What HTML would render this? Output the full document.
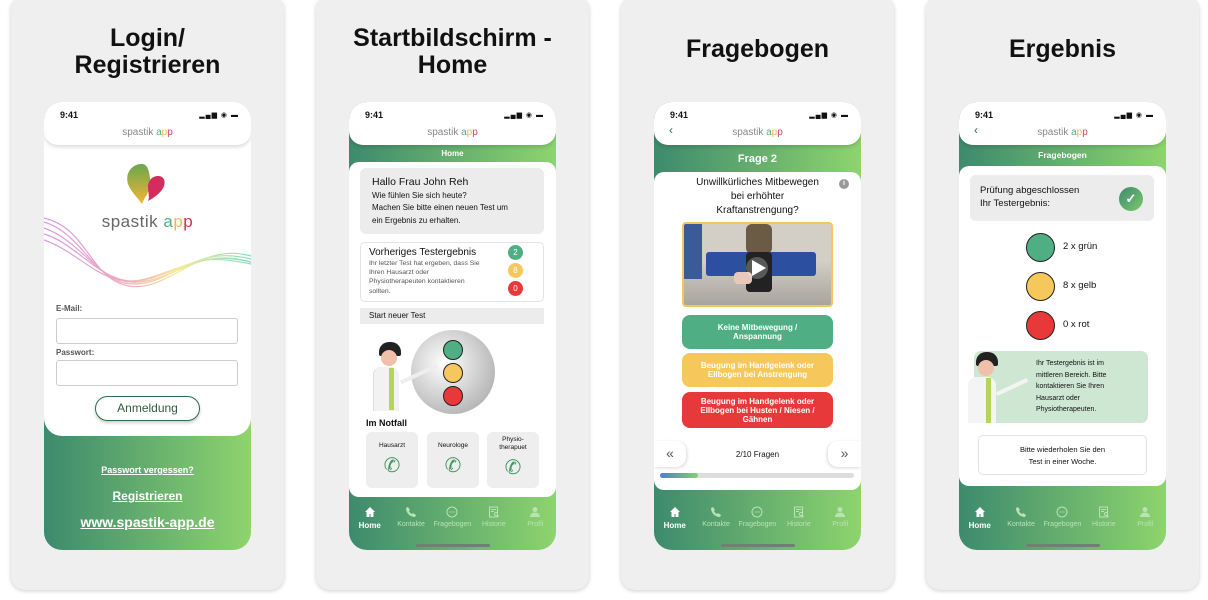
<!DOCTYPE html>
<html><head><meta charset="utf-8"><style>
*{margin:0;padding:0;box-sizing:border-box}
body{width:1208px;height:600px;background:#fff;position:relative;overflow:hidden;font-family:"Liberation Sans",sans-serif;color:#111}
.a{position:absolute}
.card{position:absolute;top:-4px;width:273px;height:594px;background:#efefef;border-radius:14px;box-shadow:0 1px 4px rgba(0,0,0,.2)}
.title{position:absolute;left:0;width:273px;text-align:center;font-weight:bold;font-size:25px;line-height:27px;color:#111}
.phone{position:absolute;top:102px;width:207px;height:448px;border-radius:18px;overflow:hidden;background:linear-gradient(90deg,#3d8a6e,#8ed46e)}
.hdr{position:absolute;left:0;top:0;width:207px;height:43px;background:#fff;border-radius:16px 16px 14px 14px;box-shadow:0 2px 4px rgba(0,0,0,.15);z-index:2}
.time{position:absolute;left:16px;top:8px;font-size:9px;font-weight:bold}
.sig{position:absolute;right:12px;top:9px;font-size:7px;letter-spacing:1px}
.brand{position:absolute;left:0;width:207px;top:25px;text-align:center;font-size:10px;color:#888}
.panel{position:absolute;left:0;width:207px;background:#fff;border-radius:10px}
.nav{position:absolute;left:0;width:207px;top:404px;display:flex;justify-content:space-around;font-size:7px;color:#b9e2b5;text-align:center}
.nav div{width:38px}.nav svg{display:block;margin:0 auto 3px}
.nav .on{color:#fff;font-weight:bold;font-size:8px}
.bar{position:absolute;left:67px;top:442px;width:74px;height:3px;border-radius:2px;background:#6f7f73}
.dot{position:absolute;border-radius:50%;border:1px solid #222}
.g{background:#4fae83}.y{background:#f6c75a}.r{background:#e7393a}
.btn{position:absolute;left:28px;width:151px;border-radius:8px;color:#fff;font-weight:bold;font-size:8px;text-align:center;display:flex;align-items:center;justify-content:center;line-height:9px}
.ph{font-size:20px;color:#3f9a62;margin-top:4px}
</style></head><body>

<div class="card" style="left:11px"><div class="title" style="top:29px">Login/<br>Registrieren</div></div>
<div class="card" style="left:316px"><div class="title" style="top:29px">Startbildschirm -<br>Home</div></div>
<div class="card" style="left:621px"><div class="title" style="top:40px">Fragebogen</div></div>
<div class="card" style="left:926px"><div class="title" style="top:40px">Ergebnis</div></div>

<!-- Phone 1 -->
<div class="phone" style="left:44px">
 <div class="a" style="left:0;top:0;width:207px;height:334px;background:#fff;border-radius:18px"></div>
 <div class="hdr"><div class="time">9:41</div><div class="sig">▂▄▆ ◉ ▬</div><div class="brand">spastik <span style="color:#4fae83">a</span><span style="color:#f0b84a">p</span><span style="color:#d6426a">p</span></div></div>
 <svg class="a" style="left:78px;top:60px" width="50" height="50" viewBox="0 0 50 50"><defs><linearGradient id="lg" x1="0" y1="0" x2="0" y2="1"><stop offset="0" stop-color="#6aa64f"/><stop offset="1" stop-color="#f2b632"/></linearGradient></defs><path d="M20 2C9 2 3 12 6 22c3 8 10 14 14 20c3-8 10-14 8-26C27 8 25 2 20 2z" fill="url(#lg)"/><path d="M36 14c-6 0-10 5-10 11 0 6 2 10 0 14 6-3 14-9 16-15 2-6-1-10-6-10z" fill="#d22d5e"/></svg>
 <div class="a" style="left:0;width:207px;top:110px;text-align:center;font-size:17px;color:#666;letter-spacing:.5px">spastik <span style="color:#4fae83">a</span><span style="color:#f0b84a">p</span><span style="color:#c8334d">p</span></div>
 <svg class="a" style="left:0;top:112px" width="207" height="90" viewBox="0 0 207 90"><defs><linearGradient id="wv" x1="0" x2="1"><stop offset="0" stop-color="#c86ad8"/><stop offset=".4" stop-color="#e98aa0"/><stop offset=".65" stop-color="#f2e06a"/><stop offset="1" stop-color="#4fd0a5"/></linearGradient></defs><g fill="none" stroke="url(#wv)" stroke-width="1.2" opacity=".7"><path d="M0 8C40 20 50 70 90 70s60-40 117-25"/><path d="M0 14C40 28 55 72 95 68s60-35 112-20"/><path d="M0 20C35 30 60 75 100 66s55-30 107-18"/><path d="M0 4C45 15 45 65 85 72s70-45 122-30"/><path d="M0 26C40 40 60 78 105 64s50-25 102-14"/></g></svg>
 <div class="a" style="left:12px;top:202px;font-size:8px;color:#555;font-weight:bold">E-Mail:</div>
 <div class="a" style="left:12px;top:216px;width:182px;height:26px;border:1px solid #ccc;border-radius:3px"></div>
 <div class="a" style="left:12px;top:246px;font-size:8px;color:#555;font-weight:bold">Passwort:</div>
 <div class="a" style="left:12px;top:258px;width:182px;height:26px;border:1px solid #ccc;border-radius:3px"></div>
 <div class="a" style="left:51px;top:294px;width:105px;height:25px;border:1.5px solid #2f6b45;border-radius:13px;text-align:center;line-height:22px;font-size:12px;color:#2f5c3d;box-shadow:0 2px 3px rgba(0,0,0,.2)">Anmeldung</div>
 <div class="a" style="left:0;width:207px;top:363px;text-align:center;color:#fff;font-size:9px;font-weight:bold;text-decoration:underline">Passwort vergessen?</div>
 <div class="a" style="left:0;width:207px;top:387px;text-align:center;color:#fff;font-size:12px;font-weight:bold;text-decoration:underline">Registrieren</div>
 <div class="a" style="left:0;width:207px;top:412px;text-align:center;color:#fff;font-size:14px;font-weight:bold;text-decoration:underline">www.spastik-app.de</div>
</div>

<!-- Phone 2 -->
<div class="phone" style="left:349px">
 <div class="hdr"><div class="time">9:41</div><div class="sig">▂▄▆ ◉ ▬</div><div class="brand">spastik <span style="color:#4fae83">a</span><span style="color:#f0b84a">p</span><span style="color:#d6426a">p</span></div></div>
 <div class="a" style="left:0;width:207px;top:47px;text-align:center;color:#fff;font-size:8px;font-weight:bold">Home</div>
 <div class="panel" style="top:60px;height:335px"></div>
 <div class="a" style="left:11px;top:66px;width:184px;height:66px;background:#ececec;border-radius:6px;padding:8px 0 0 12px;font-size:8px;line-height:12.5px"><div style="font-size:10.5px;margin-bottom:1px">Hallo Frau John Reh</div>Wie fühlen Sie sich heute?<br>Machen Sie bitte einen neuen Test um<br>ein Ergebnis zu erhalten.</div>
 <div class="a" style="left:11px;top:140px;width:184px;height:60px;border:1px solid #e4e4e4;border-radius:5px;padding:4px 0 0 8px;font-size:6.8px;line-height:9.2px;color:#555"><div style="font-size:10px;color:#111;line-height:12px">Vorheriges Testergebnis</div>Ihr letzter Test hat ergeben, dass Sie<br>Ihren Hausarzt oder<br>Physiotherapeuten kontaktieren<br>sollten.</div>
 <div class="a g" style="left:159px;top:143px;width:15px;height:15px;border-radius:50%;color:#fff;font-size:8px;text-align:center;line-height:15px">2</div>
 <div class="a y" style="left:159px;top:161px;width:15px;height:15px;border-radius:50%;color:#fff;font-size:8px;text-align:center;line-height:15px">8</div>
 <div class="a r" style="left:159px;top:179px;width:15px;height:15px;border-radius:50%;color:#fff;font-size:8px;text-align:center;line-height:15px">0</div>
 <div class="a" style="left:11px;top:206px;width:184px;height:16px;background:#ececec;font-size:8px;line-height:16px;padding-left:9px">Start neuer Test</div>
 <div class="a" style="left:62px;top:228px;width:84px;height:84px;border-radius:50%;background:radial-gradient(circle at 40% 40%,#fff,#bbb 70%,#999)"></div>
 <div class="dot g a" style="left:94px;top:238px;width:20px;height:20px"></div>
 <div class="dot y a" style="left:94px;top:261px;width:20px;height:20px"></div>
 <div class="dot r a" style="left:94px;top:284px;width:20px;height:20px"></div>
 <div class="a" style="left:30px;top:240px;width:22px;height:14px;background:#222;border-radius:10px 10px 2px 2px"></div>
 <div class="a" style="left:32px;top:248px;width:16px;height:16px;background:#f0c0a8;border-radius:50%"></div>
 <div class="a" style="left:24px;top:265px;width:26px;height:44px;background:#f2f2f2;border-radius:8px 8px 0 0;border-left:1px solid #ddd"></div>
 <div class="a" style="left:40px;top:266px;width:5px;height:42px;background:#b6d455"></div>
 <div class="a" style="left:50px;top:270px;width:40px;height:4px;background:#eee;transform:rotate(-25deg)"></div>
 <div class="a" style="left:17px;top:316px;font-size:9px;font-weight:bold">Im Notfall</div>
 <div class="a" style="left:17px;top:330px;width:52px;height:56px;background:#eee;border-radius:6px;text-align:center;font-size:6.5px;padding-top:10px">Hausarzt<div class="ph">✆</div></div>
 <div class="a" style="left:78px;top:330px;width:52px;height:56px;background:#eee;border-radius:6px;text-align:center;font-size:6.5px;padding-top:10px">Neurologe<div class="ph">✆</div></div>
 <div class="a" style="left:138px;top:330px;width:52px;height:56px;background:#eee;border-radius:6px;text-align:center;font-size:6.5px;padding-top:4px;line-height:8px">Physio-<br>therapuet<div class="ph" style="line-height:24px">✆</div></div>
 <div class="nav" id="n2"></div>
 <div class="bar"></div>
</div>

<!-- Phone 3 -->
<div class="phone" style="left:654px">
 <div class="hdr"><div class="time">9:41</div><div class="sig">▂▄▆ ◉ ▬</div><div class="a" style="left:15px;top:21px;color:#2f6b45;font-size:12px">‹</div><div class="brand">spastik <span style="color:#4fae83">a</span><span style="color:#f0b84a">p</span><span style="color:#d6426a">p</span></div></div>
 <div class="a" style="left:0;width:207px;top:51px;text-align:center;color:#fff;font-size:11px;font-weight:bold">Frage 2</div>
 <div class="panel" style="top:70px;height:318px"></div>
 <div class="a" style="left:20px;width:167px;top:74px;text-align:center;font-size:10px;line-height:14px">Unwillkürliches Mitbewegen<br>bei erhöhter<br>Kraftanstrengung?</div>
 <div class="a" style="left:185px;top:77px;width:10px;height:10px;border-radius:50%;background:#999;color:#fff;font-size:7px;text-align:center;line-height:10px;font-weight:bold">i</div>
 <div class="a" style="left:28px;top:120px;width:151px;height:85px;border:2px solid #f2c85a;border-radius:4px;background:linear-gradient(180deg,#d3cec6 0,#d3cec6 45%,#a8a49e 100%);overflow:hidden">
  <div class="a" style="left:22px;top:28px;width:110px;height:24px;background:#2d4fa0;border-radius:3px"></div>
  <div class="a" style="left:0;top:0;width:18px;height:55px;background:#3a5a9a"></div>
  <div class="a" style="left:62px;top:0;width:26px;height:30px;background:#6b5b45;border-radius:6px"></div>
  <div class="a" style="left:62px;top:28px;width:26px;height:40px;background:#222;border-radius:4px"></div>
  <div class="a" style="left:50px;top:48px;width:18px;height:12px;background:#e8c8b8;border-radius:4px"></div>
  <div class="a" style="left:62px;top:33px;width:22px;height:22px;border-radius:50%;background:rgba(255,255,255,.25)"></div>
  <div class="a" style="left:68px;top:36px;width:0;height:0;border-left:14px solid #fff;border-top:8px solid transparent;border-bottom:8px solid transparent"></div>
 </div>
 <div class="btn g" style="top:213px;height:34px">Keine Mitbewegung /<br>Anspannung</div>
 <div class="btn y" style="top:251px;height:34px">Beugung im Handgelenk oder<br>Ellbogen bei Anstrengung</div>
 <div class="btn r" style="top:290px;height:36px">Beugung im Handgelenk oder<br>Ellbogen bei Husten / Niesen /<br>Gähnen</div>
 <div class="a" style="left:0;top:339px;width:32px;height:26px;background:#fff;border-radius:0 10px 10px 0;box-shadow:1px 1px 3px rgba(0,0,0,.15);font-size:14px;text-align:center;line-height:24px;color:#555">«</div>
 <div class="a" style="left:174px;top:339px;width:33px;height:26px;background:#fff;border-radius:10px 0 0 10px;box-shadow:-1px 1px 3px rgba(0,0,0,.15);font-size:14px;text-align:center;line-height:24px;color:#555">»</div>
 <div class="a" style="left:0;width:207px;top:348px;text-align:center;font-size:8px">2/10 Fragen</div>
 <div class="a" style="left:6px;top:371px;width:194px;height:5px;background:#ddd;border-radius:3px"></div>
 <div class="a" style="left:6px;top:371px;width:38px;height:5px;background:linear-gradient(90deg,#4a7fd0,#7ed46e);border-radius:3px"></div>
 <div class="nav" id="n3"></div>
 <div class="bar"></div>
</div>

<!-- Phone 4 -->
<div class="phone" style="left:959px">
 <div class="hdr"><div class="time">9:41</div><div class="sig">▂▄▆ ◉ ▬</div><div class="a" style="left:15px;top:21px;color:#2f6b45;font-size:12px">‹</div><div class="brand">spastik <span style="color:#4fae83">a</span><span style="color:#f0b84a">p</span><span style="color:#d6426a">p</span></div></div>
 <div class="a" style="left:0;width:207px;top:48px;text-align:center;color:#fff;font-size:8.5px;font-weight:bold">Fragebogen</div>
 <div class="panel" style="top:64px;height:320px"></div>
 <div class="a" style="left:11px;top:73px;width:184px;height:46px;background:#ececec;border-radius:6px;padding:9px 0 0 10px;font-size:9.5px;line-height:13px">Prüfung abgeschlossen<br>Ihr Testergebnis:</div>
 <div class="a" style="left:160px;top:85px;width:24px;height:24px;border-radius:50%;background:linear-gradient(135deg,#3d8a6e,#7cc96e);color:#fff;text-align:center;line-height:24px;font-size:13px;font-weight:bold">✓</div>
 <div class="dot g a" style="left:67px;top:131px;width:29px;height:29px"></div>
 <div class="a" style="left:104px;top:139px;font-size:9.5px">2 x grün</div>
 <div class="dot y a" style="left:67px;top:170px;width:29px;height:29px"></div>
 <div class="a" style="left:104px;top:178px;font-size:9.5px">8 x gelb</div>
 <div class="dot r a" style="left:67px;top:209px;width:29px;height:29px"></div>
 <div class="a" style="left:104px;top:217px;font-size:9.5px">0 x rot</div>
 <div class="a" style="left:15px;top:249px;width:174px;height:72px;background:#cde7d3;border-radius:7px;padding:7px 0 0 62px;font-size:7px;line-height:11.5px">Ihr Testergebnis ist im<br>mittleren Bereich. Bitte<br>kontaktieren Sie Ihren<br>Hausarzt oder<br>Physiotherapeuten.</div>
 <div class="a" style="left:17px;top:250px;width:22px;height:14px;background:#222;border-radius:10px 10px 2px 2px"></div>
 <div class="a" style="left:19px;top:258px;width:16px;height:16px;background:#f0c0a8;border-radius:50%"></div>
 <div class="a" style="left:9px;top:275px;width:28px;height:46px;background:#f4f4f4;border-radius:8px 8px 0 0"></div>
 <div class="a" style="left:27px;top:276px;width:5px;height:45px;background:#b6d455"></div>
 <div class="a" style="left:36px;top:283px;width:34px;height:4px;background:#f4f4f4;transform:rotate(-25deg)"></div>
 <div class="a" style="left:19px;top:333px;width:169px;height:40px;border:1px solid #e2e2e2;border-radius:5px;text-align:center;font-size:7.5px;line-height:11.5px;padding-top:8px">Bitte wiederholen Sie den<br>Test in einer Woche.</div>
 <div class="nav" id="n4"></div>
 <div class="bar"></div>
</div>

<template id="navt"><div class="on"><svg width="12" height="12" viewBox="0 0 12 12"><path d="M6 1L1 6h1.5v5h3V8h1v3h3V6H11z" fill="#fff"/></svg>Home</div><div><svg width="12" height="12" viewBox="0 0 12 12"><path d="M3 1l2 3-1 1c.5 1.3 1.7 2.5 3 3l1-1 3 2-1 2C5 11 1 7 1 2z" fill="#b9e2b5"/></svg>Kontakte</div><div><svg width="12" height="12" viewBox="0 0 12 12"><circle cx="6" cy="6" r="5" fill="none" stroke="#b9e2b5" stroke-width="1"/><circle cx="4" cy="6" r=".6" fill="#b9e2b5"/><circle cx="6" cy="6" r=".6" fill="#b9e2b5"/><circle cx="8" cy="6" r=".6" fill="#b9e2b5"/></svg>Fragebogen</div><div><svg width="12" height="12" viewBox="0 0 12 12"><rect x="1.5" y="1" width="8" height="10" fill="none" stroke="#b9e2b5"/><path d="M3 3.5h5M3 5.5h3" stroke="#b9e2b5"/><circle cx="8" cy="8" r="1.6" fill="none" stroke="#b9e2b5"/><path d="M9.2 9.2l1.5 1.5" stroke="#b9e2b5"/></svg>Historie</div><div><svg width="12" height="12" viewBox="0 0 12 12"><circle cx="6" cy="3.5" r="2.5" fill="#b9e2b5"/><path d="M1 11c0-3 2.5-4.5 5-4.5S11 8 11 11z" fill="#b9e2b5"/></svg>Profil</div></template>
<script>
var t=document.getElementById('navt').innerHTML;
['n2','n3','n4'].forEach(function(i){document.getElementById(i).innerHTML=t;});
</script>
</body></html>
